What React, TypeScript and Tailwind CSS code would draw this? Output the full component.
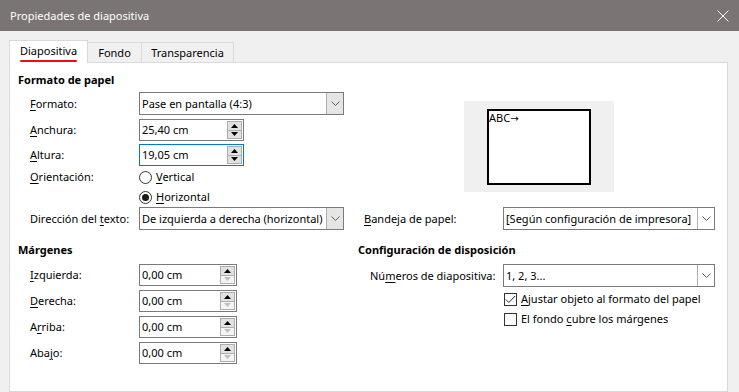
import type { ReactNode } from "react";

// mnemonic letter, underlined like a Windows dialog
function U({ children }: { children: ReactNode }) {
  return <span className="underline underline-offset-2 decoration-1">{children}</span>;
}

function Chevron() {
  return (
    <svg width="9" height="6" viewBox="0 0 9 6">
      <path d="M0.5 0.5 L4.5 4.5 L8.5 0.5" fill="none" stroke="#606060" strokeWidth="1" />
    </svg>
  );
}

function Dropdown({
  value,
  className,
  grayButton,
}: {
  value: string;
  className: string;
  grayButton?: boolean;
}) {
  return (
    <div className={`flex h-[23px] items-stretch border border-[#7a7a7a] bg-white ${className}`}>
      <span className="flex flex-1 items-center overflow-hidden whitespace-nowrap pl-[2px]">{value}</span>
      <span
        className={`flex w-[17px] items-center justify-center border-l border-[#adadad] ${
          grayButton ? "bg-[#e5e5e5]" : "bg-white"
        }`}
      >
        <Chevron />
      </span>
    </div>
  );
}

function Tri({ up, color }: { up?: boolean; color: string }) {
  return (
    <svg width="7" height="4" viewBox="0 0 7 4">
      <path d={up ? "M0 4 L3.5 0 L7 4 Z" : "M0 0 L3.5 4 L7 0 Z"} fill={color} />
    </svg>
  );
}

function Spin({
  value,
  className,
  focused,
  downDisabled,
}: {
  value: string;
  className: string;
  focused?: boolean;
  downDisabled?: boolean;
}) {
  return (
    <div
      className={`flex h-[22px] items-center border bg-white ${
        focused ? "border-[#0078d7]" : "border-[#7a7a7a]"
      } ${className}`}
    >
      <span className="flex-1 pl-[2px]">{value}</span>
      <div className="mr-[1px] flex h-[18px] w-[15px] flex-col border border-[#adadad]">
        <span className="flex flex-1 items-center justify-center border-b border-[#adadad] bg-[#e1e1e1]">
          <Tri up color="#000" />
        </span>
        <span
          className={`flex flex-1 items-center justify-center ${
            downDisabled ? "bg-[#f4f4f4]" : "bg-[#e1e1e1]"
          }`}
        >
          <Tri color={downDisabled ? "#bfbfbf" : "#000"} />
        </span>
      </div>
    </div>
  );
}

function Radio({ checked, children }: { checked?: boolean; children: ReactNode }) {
  return (
    <div className="flex h-[20px] items-center gap-[4px]">
      <span className="flex h-[13px] w-[13px] items-center justify-center rounded-full border border-[#333] bg-white">
        {checked && <span className="h-[7px] w-[7px] rounded-full bg-[#1a1a1a]" />}
      </span>
      <span>{children}</span>
    </div>
  );
}

function Check({ checked, children }: { checked?: boolean; children: ReactNode }) {
  return (
    <div className="flex h-[20px] items-center gap-[4px] pl-[146px]">
      <span className="flex h-[13px] w-[13px] items-center justify-center border border-[#333] bg-white">
        {checked && (
          <svg width="11" height="9" viewBox="0 0 11 9">
            <path d="M0.8 4.5 L3.8 7.5 L10.2 1" fill="none" stroke="#222" strokeWidth="1" />
          </svg>
        )}
      </span>
      <span>{children}</span>
    </div>
  );
}

export default function App() {
  return (
    <div className="flex h-[392px] w-[739px] flex-col overflow-hidden bg-[#f0f0f0] font-['Noto_Sans',sans-serif] text-[11px] leading-[16px] text-black">
      {/* title bar */}
      <div className="flex h-[31px] shrink-0 items-center justify-between bg-[#7a7574] pl-[10px] pr-[10px] text-[11px] text-white">
        <span>Propiedades de diapositiva</span>
        <svg width="12" height="12" viewBox="0 0 12 12">
          <path d="M0.5 0.5 L11.5 11.5 M11.5 0.5 L0.5 11.5" stroke="#fff" strokeWidth="1" />
        </svg>
      </div>

      {/* tabs */}
      <div className="mt-[9px] flex items-end pl-[9px]">
        <div className="relative z-10 -mb-px flex h-[23px] w-[79px] flex-col items-center justify-center border border-b-0 border-[#d9d9d9] bg-white">
          <span className="mt-[1px]">Diapositiva</span>
          <span className="mt-[1px] h-[2px] w-[57px] rounded-full bg-[#e81010]" />
        </div>
        <div className="flex h-[20px] w-[54px] items-center justify-center border-t border-r border-[#d9d9d9]">
          Fondo
        </div>
        <div className="flex h-[20px] w-[92px] items-center justify-center border-t border-r border-[#d9d9d9]">
          Transparencia
        </div>
      </div>

      {/* page */}
      <div className="ml-[9px] mr-[11px] flex-1 border border-[#d9d9d9] bg-white pl-[8px] pt-[8px]">
        {/* paper format */}
        <div className="flex">
          <div className="w-[340px]">
            <div className="h-[18px] font-bold leading-[18px]">Formato de papel</div>
            <div className="ml-[12px] mt-[3px] flex items-center">
              <span className="w-[109px]">
                <U>F</U>ormato:
              </span>
              <Dropdown value="Pase en pantalla (4:3)" className="w-[205px]" grayButton />
            </div>
            <div className="ml-[12px] mt-[4px] flex items-center">
              <span className="w-[109px]">
                <U>A</U>nchura:
              </span>
              <Spin value="25,40 cm" className="w-[105px]" />
            </div>
            <div className="ml-[12px] mt-[3px] flex items-center">
              <span className="w-[109px]">
                <U>A</U>ltura:
              </span>
              <Spin value="19,05 cm" className="w-[105px]" focused />
            </div>
            <div className="ml-[12px] mt-[1px] flex">
              <span className="flex h-[20px] w-[109px] items-center">
                <U>O</U>rientación:
              </span>
              <div className="flex flex-col">
                <Radio>
                  <U>V</U>ertical
                </Radio>
                <Radio checked>
                  <U>H</U>orizontal
                </Radio>
              </div>
            </div>
          </div>
          <div className="ml-[106px] mt-[30px] flex h-[91px] w-[150px] items-center justify-center bg-[#f0f0f0]">
            <div className="h-[76px] w-[104px] border-2 border-black bg-white text-[11px] leading-[14px]">
              ABC<span className="font-['DejaVu_Sans',sans-serif] text-[10px]">→</span>
            </div>
          </div>
        </div>

        {/* text direction / paper tray */}
        <div className="flex items-center">
          <div className="ml-[12px] flex w-[328px] items-center">
            <span className="w-[109px]">
              Dirección del <U>t</U>exto:
            </span>
            <Dropdown value="De izquierda a derecha (horizontal)" className="w-[205px]" grayButton />
          </div>
          <span className="ml-[6px] w-[139px]">
            <U>B</U>andeja de papel:
          </span>
          <Dropdown value="[Según configuración de impresora]" className="w-[212px]" />
        </div>

        {/* margins / layout */}
        <div className="mt-[11px] flex">
          <div className="w-[340px]">
            <div className="h-[18px] font-bold leading-[18px]">Márgenes</div>
            <div className="ml-[12px] mt-[5px] flex flex-col gap-[4px]">
              {[
                [<U key="i">I</U>, "zquierda:"],
                [<U key="d">D</U>, "erecha:"],
                ["A", <U key="r">r</U>, "riba:"],
                ["Aba", <U key="j">j</U>, "o:"],
              ].map((parts, i) => (
                <div key={i} className="flex items-center">
                  <span className="w-[109px]">{parts}</span>
                  <Spin value="0,00 cm" className="w-[98px]" downDisabled />
                </div>
              ))}
            </div>
          </div>
          <div>
            <div className="h-[18px] font-bold leading-[18px]">Configuración de disposición</div>
            <div className="ml-[12px] mt-[5px] flex items-center">
              <span className="w-[133px]">
                Nú<U>m</U>eros de diapositiva:
              </span>
              <Dropdown value="1, 2, 3..." className="w-[212px]" />
            </div>
            <div className="mt-[2px]">
              <Check checked>
                <U>A</U>justar objeto al formato del papel
              </Check>
              <Check>
                El fondo <U>c</U>ubre los márgenes
              </Check>
            </div>
          </div>
        </div>
      </div>
    </div>
  );
}
